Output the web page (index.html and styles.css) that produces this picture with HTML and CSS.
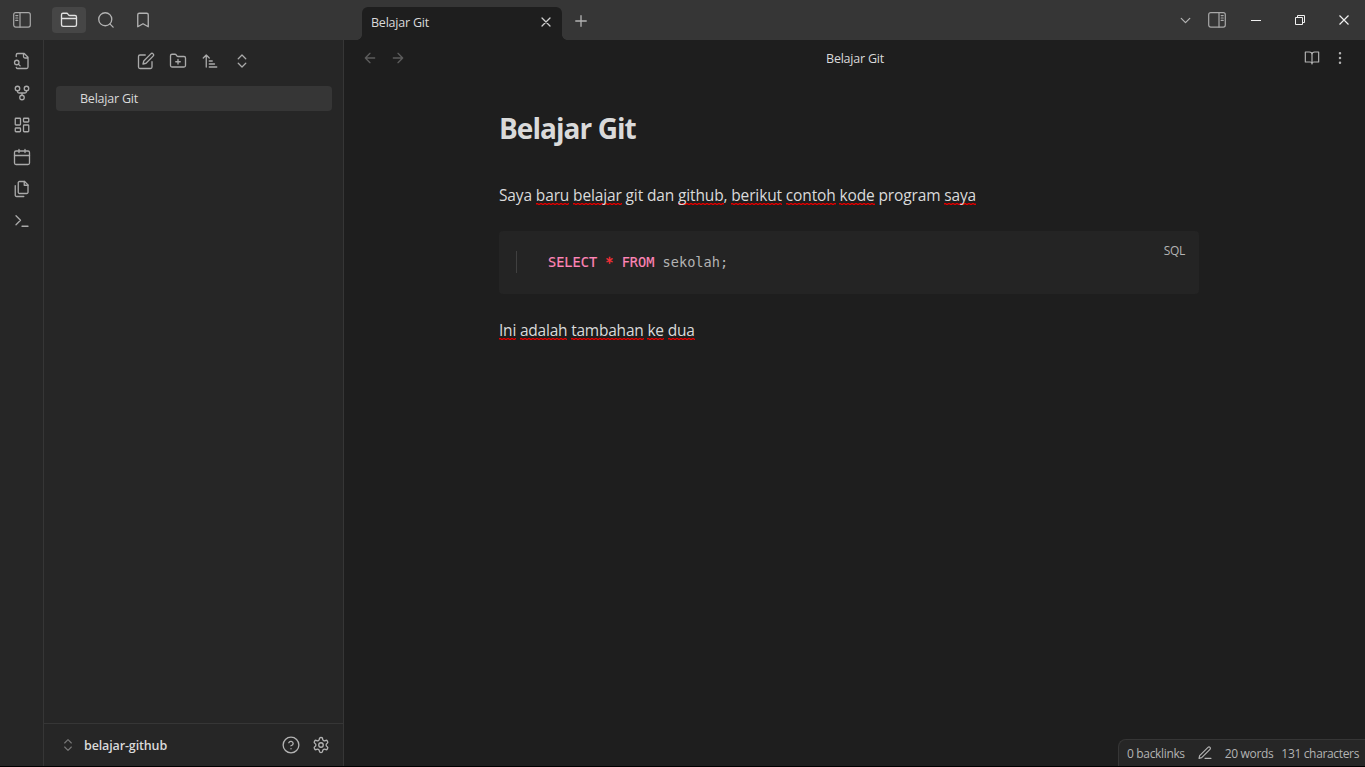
FILE: index.html
```html
<!DOCTYPE html>
<html lang="id">
<head>
<meta charset="utf-8">
<title>Belajar Git</title>
<link rel="stylesheet" href="styles.css">
</head>
<body>
<div class="app">
  <header class="titlebar">
    <div class="titlebar-left">
      <button class="tool toggle"><svg class="icon panel" viewBox="0 0 18 16"><rect x=".7" y=".7" width="16.6" height="14.4" rx="2"/><path d="M7 .7v14.4M2.8 3.6h2M2.8 6h2M2.8 8.4h2"/></svg></button>
      <button class="tool active"><svg class="icon" viewBox="0 0 24 24"><path d="M22 11V8a2 2 0 0 0-2-2h-7.1a2 2 0 0 1-1.4-.6l-1.1-1.5A2 2 0 0 0 8.900 3H4a2 2 0 0 0-2 2v13a2.500 2.500 0 0 0 2.500 2.500h15A2.500 2.500 0 0 0 22 18v-8H2"/></svg></button>
      <button class="tool"><svg class="icon" viewBox="0 0 24 24"><circle cx="11" cy="11" r="8.700"/><path d="m21.500 21.500-4.300-4.300"/></svg></button>
      <button class="tool"><svg class="icon" viewBox="0 0 24 24"><path d="m19 21-7-4-7 4V5a2 2 0 0 1 2-2h10a2 2 0 0 1 2 2v16z"/></svg></button>
    </div>
    <div class="tabs">
      <div class="tab"><span class="ui-text">Belajar Git</span><svg class="icon close" viewBox="0 0 24 24"><path d="M18 6 6 18M6 6l12 12"/></svg></div>
      <svg class="icon plus" viewBox="0 0 24 24"><path d="M5 12h14M12 5v14"/></svg>
    </div>
    <div class="window-tools">
      <svg class="icon chevron" viewBox="0 0 24 24"><path d="m6 9 6 6 6-6"/></svg>
      <svg class="icon panel" viewBox="0 0 18 16"><rect x=".7" y=".7" width="16.600" height="14.400" rx="2"/><path d="M11 .7v14.400M13.200 3.600h2M13.200 6h2M13.200 8.400h2"/></svg>
      <svg class="win minimize" viewBox="0 0 10 10"><path d="M0 5.500h10"/></svg>
      <svg class="win restore" viewBox="0 0 10 10"><path d="M.5 2.500h7v7h-7zM2.500 2.500v-2h7v7h-2"/></svg>
      <svg class="win quit" viewBox="0 0 10 10"><path d="m.5.5 9 9m0-9-9 9"/></svg>
    </div>
  </header>
  <div class="workspace">
    <nav class="ribbon">
      <svg class="icon" viewBox="0 0 24 24"><path d="M14 2v4a2 2 0 0 0 2 2h4M4.300 6V4a2 2 0 0 1 2-2H15l5 5v13a2 2 0 0 1-2 2H6.300a2 2 0 0 1-1.900-1.400"/><circle cx="5" cy="14" r="3"/><path d="m9.500 18.500-2.300-2.300"/></svg>
      <svg class="icon" viewBox="0 0 24 24"><circle cx="12" cy="18" r="3"/><circle cx="6" cy="6" r="3"/><circle cx="18" cy="6" r="3"/><path d="M18 9v1a2 2 0 0 1-2 2H8a2 2 0 0 1-2-2V9M12 12v3"/></svg>
      <svg class="icon" viewBox="0 0 24 24"><rect x="3" y="3" width="7" height="9" rx="1"/><rect x="14" y="3" width="7" height="5" rx="1"/><rect x="14" y="12" width="7" height="9" rx="1"/><rect x="3" y="16" width="7" height="5" rx="1"/></svg>
      <svg class="icon" viewBox="0 0 24 24"><rect x="2" y="4" width="20" height="18" rx="2"/><path d="M16 2v4M8 2v4M2 10h20"/></svg>
      <svg class="icon" viewBox="0 0 24 24"><path d="M15.500 2H8.600c-.4 0-.8.200-1.100.5-.3.300-.5.700-.5 1.100v12.800c0 .4.200.8.500 1.100.3.300.7.500 1.100.5h9.800c.4 0 .8-.2 1.100-.5.300-.3.500-.7.500-1.100V6.500L15.500 2z"/><path d="M3 7.600v12.800c0 .4.200.8.500 1.100.3.300.7.500 1.100.5h9.800M15 2v5h5"/></svg>
      <svg class="icon" viewBox="0 0 24 24"><path d="m4 17 6-6-6-6M12 19h8"/></svg>
    </nav>
    <aside class="sidebar">
      <div class="file-tools">
        <svg class="icon" viewBox="0 0 24 24"><path d="M11 4H4a2 2 0 0 0-2 2v14a2 2 0 0 0 2 2h14a2 2 0 0 0 2-2v-7"/><path d="M18.500 2.500a2.121 2.121 0 0 1 3 3L12 15l-4 1 1-4z"/></svg>
        <svg class="icon" viewBox="0 0 24 24"><path d="M12 10v6M9 13h6M20 20a2 2 0 0 0 2-2V8a2 2 0 0 0-2-2h-7.900a2 2 0 0 1-1.690-.9L9.600 3.900A2 2 0 0 0 7.930 3H4a2 2 0 0 0-2 2v13a2 2 0 0 0 2 2z"/></svg>
        <svg class="icon" viewBox="0 0 24 24"><path d="m3 8 4-4 4 4M7 4v16M11 12h4M11 16h7M11 20h10"/></svg>
        <svg class="icon" viewBox="0 0 24 24"><path d="m7 15 5 5 5-5M7 9l5-5 5 5"/></svg>
      </div>
      <div class="files"><div class="file"><span class="ui-text">Belajar Git</span></div></div>
      <footer class="vault">
        <svg class="icon switch" viewBox="0 0 24 24"><path d="m7 15 5 5 5-5M7 9l5-5 5 5"/></svg>
        <span class="vault-name">belajar-github</span>
        <svg class="icon" viewBox="0 0 24 24"><circle cx="12" cy="12" r="10.500"/><path d="M9.100 9a3 3 0 0 1 5.800 1c0 2-3 3-3 3M12 17h.01"/></svg>
        <svg class="icon" viewBox="0 0 24 24"><path d="M12.220 2h-.44a2 2 0 0 0-2 2v.18a2 2 0 0 1-1 1.730l-.43.250a2 2 0 0 1-2 0l-.15-.08a2 2 0 0 0-2.730.730l-.22.380a2 2 0 0 0 .730 2.730l.15.100a2 2 0 0 1 1 1.720v.51a2 2 0 0 1-1 1.740l-.15.090a2 2 0 0 0-.73 2.730l.22.380a2 2 0 0 0 2.730.73l.15-.08a2 2 0 0 1 2 0l.43.250a2 2 0 0 1 1 1.730V20a2 2 0 0 0 2 2h.44a2 2 0 0 0 2-2v-.18a2 2 0 0 1 1-1.730l.43-.25a2 2 0 0 1 2 0l.15.080a2 2 0 0 0 2.730-.73l.22-.39a2 2 0 0 0-.73-2.730l-.15-.08a2 2 0 0 1-1-1.740v-.5a2 2 0 0 1 1-1.740l.15-.09a2 2 0 0 0 .73-2.730l-.22-.38a2 2 0 0 0-2.730-.73l-.15.080a2 2 0 0 1-2 0l-.43-.25a2 2 0 0 1-1-1.730V4a2 2 0 0 0-2-2z"/><circle cx="12" cy="12" r="3"/></svg>
      </footer>
    </aside>
    <main class="pane">
      <div class="view-header">
        <div class="history">
          <svg class="icon" viewBox="0 0 24 24"><path d="m12 19-7-7 7-7M19 12H5"/></svg>
          <svg class="icon" viewBox="0 0 24 24"><path d="M5 12h14M12 5l7 7-7 7"/></svg>
        </div>
        <span class="ui-text">Belajar Git</span>
        <div class="view-actions">
          <svg class="icon" viewBox="0 0 24 24"><path d="M2 3h6a4 4 0 0 1 4 4v14a3 3 0 0 0-3-3H2zM22 3h-6a4 4 0 0 0-4 4v14a3 3 0 0 1 3-3h7z"/></svg>
          <svg class="icon dots" viewBox="0 0 24 24"><circle cx="12" cy="12" r="1"/><circle cx="12" cy="5" r="1"/><circle cx="12" cy="19" r="1"/></svg>
        </div>
      </div>
      <article class="note">
        <h1 class="title">Belajar Git</h1>
        <p class="line intro">Saya <span class="sp">baru</span> <span class="sp">belajar</span> git dan <span class="sp">github</span>, <span class="sp">berikut</span> <span class="sp">contoh</span> <span class="sp">kode</span> program <span class="sp">saya</span></p>
        <div class="code"><code class="source"><span class="kw">SELECT</span> <span class="op">*</span> <span class="kw">FROM</span> sekolah;</code><span class="lang">SQL</span></div>
        <p class="line outro"><span class="sp">Ini</span> <span class="sp">adalah</span> <span class="sp">tambahan</span> <span class="sp">ke</span> <span class="sp">dua</span></p>
      </article>
      <div class="status">
        <span>0 backlinks</span>
        <svg class="icon" viewBox="0 0 24 24"><path d="M12 20h9M16.500 3.500a2.121 2.121 0 0 1 3 3L7 19l-4 1 1-4z"/></svg>
        <span class="words">20 words</span>
        <span class="chars">131 characters</span>
      </div>
    </main>
  </div>
</div>
</body>
</html>
```
FILE: styles.css
```css
* { box-sizing: border-box; }
body { margin: 0; background: #000; color: #dadada; font-family: "Open Sans", "Noto Sans", sans-serif; font-size: 13px; }
.app { width: 1365px; height: 766px; display: flex; flex-direction: column; overflow: hidden; }
.icon { width: 18px; height: 18px; flex: none; fill: none; stroke: #b3b3b3; stroke-width: 1.75; stroke-linecap: round; stroke-linejoin: round; }
.panel { height: 16px; stroke-width: 1.2; stroke: #a8a8a8; }
.ui-text { font-size: 12.5px; letter-spacing: -0.22px; line-height: 18px; white-space: nowrap; }

.titlebar { height: 40px; display: flex; background: #363636; flex: none; }
.titlebar-left { width: 362px; display: flex; align-items: center; padding-left: 5px; gap: 3px; }
.tool { width: 34px; height: 26px; padding: 0; border: 0; border-radius: 4px; background: none; display: flex; align-items: center; justify-content: center; }
.toggle { margin-right: 10px; }
.active { background: #464646; }
.active .icon { stroke: #e2e2e2; }
.tabs { flex: 1; display: flex; align-items: flex-end; }
.tab { position: relative; width: 200px; height: 33px; padding: 0 8px 2px 9px; display: flex; align-items: center; justify-content: space-between; background: #1e1e1e; border-radius: 6px 6px 0 0; }
.tab::before, .tab::after { content: ""; position: absolute; bottom: 0; width: 5px; height: 5px; }
.tab::before { left: -5px; background: radial-gradient(circle at 0 0, transparent 4.5px, #1e1e1e 5px); }
.tab::after { right: -5px; background: radial-gradient(circle at 100% 0, transparent 4.5px, #1e1e1e 5px); }
.close { width: 16px; height: 16px; margin-bottom: 1px; stroke: #d0d0d0; stroke-width: 1.9; }
.plus { margin: 0 0 10px 10px; }
.window-tools { width: 189px; display: flex; align-items: center; }
.chevron { width: 17px; height: 17px; margin: 1px 14px 0 1px; }
.win { width: 10px; height: 10px; fill: none; stroke: #f0f0f0; stroke-width: 1; }
.minimize { margin-left: 25px; }
.restore { margin-left: 34px; }
.quit { margin-left: 34px; stroke-width: 1.2; }

.workspace { flex: 1; display: flex; min-height: 0; }
.ribbon { width: 44px; padding-top: 12px; display: flex; flex-direction: column; align-items: center; gap: 14px; background: #262626; border-right: 1px solid #363636; }
.ribbon .icon, .file-tools .icon { stroke: #aaa; }
.sidebar { width: 300px; display: flex; flex-direction: column; background: #262626; border-right: 1px solid #363636; }
.file-tools { height: 46px; display: flex; justify-content: center; gap: 14px; padding-top: 12px; }
.files { flex: 1; padding: 0 11px 0 12px; }
.file { height: 25px; padding-left: 24px; display: flex; align-items: center; background: #363636; border-radius: 4px; }
.vault { height: 43px; padding: 0 13px 0 16px; display: flex; align-items: center; border-top: 1px solid #363636; }
.vault .icon + .icon { margin-left: 12px; }
.vault .switch { width: 16px; height: 16px; stroke: #777; }
.vault-name { flex: 1; margin-left: 8px; font-weight: 600; font-size: 12.5px; letter-spacing: -0.13px; }

.pane { position: relative; width: 1021px; background: #1e1e1e; display: flex; flex-direction: column; }
.view-header { height: 38px; display: grid; grid-template-columns: 1fr auto 1fr; align-items: center; padding: 0 16px 0 17px; flex: none; }
.history { display: flex; gap: 10px; padding-bottom: 2px; }
.history .icon { width: 18px; height: 16px; stroke: #5c5c5c; stroke-width: 2; }
.view-actions { display: flex; justify-content: flex-end; gap: 10px; padding-bottom: 2px; }
.view-actions .icon { height: 16px; }
.note { width: 700px; margin: 31px 0 0 155px; }
.title { margin: 0 0 36px; font-size: 28px; line-height: 38px; font-weight: 700; letter-spacing: -0.95px; }
.line { margin: 0; font-size: 15.5px; line-height: 24px; white-space: nowrap; }
.intro { letter-spacing: -0.14px; }
.outro { letter-spacing: -0.22px; }
/* Two-row zigzag marking misspelled words */
.sp {
  background-image: linear-gradient(90deg, #e00000 50%, #7f0c0c 50%), linear-gradient(90deg, #7f0c0c 50%, #e00000 50%);
  background-size: 4px 1px;
  background-repeat: repeat-x;
  background-position: 0 calc(100% - 2px), 0 calc(100% - 1px);
}
.code { height: 63px; margin: 24px 0 24px; padding: 20px 14px 0 17px; display: flex; justify-content: space-between; background: #242424; border-radius: 4px; }
.source { height: 22px; padding-left: 31px; border-left: 1px solid #404040; font: 13.6px/22px "DejaVu Sans Mono", monospace; color: #b3b3b3; white-space: pre; }
.kw { color: #ff86b8; -webkit-text-stroke: 0.15px #ff86b8; }
.op { color: #fb3038; -webkit-text-stroke: 0.4px #fb3038; }
.lang { margin-top: -9px; font-size: 12px; line-height: 18px; letter-spacing: -0.3px; color: #b3b3b3; }
.status { position: absolute; right: 0; bottom: 0; width: 247px; height: 27px; padding-left: 8px; display: flex; align-items: center; border: 1px solid #363636; border-width: 1px 0 0 1px; border-radius: 8px 0 0 0; background: #262626; color: #b3b3b3; font-size: 12px; letter-spacing: -0.34px; white-space: nowrap; }
.status .icon { width: 16px; height: 16px; margin: 0 12px; }
.chars { margin-left: 8px; }
```
